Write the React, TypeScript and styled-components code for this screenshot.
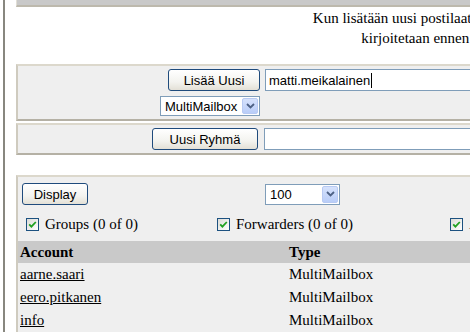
import React from 'react';
import styled, { createGlobalStyle } from 'styled-components';

const GlobalStyle = createGlobalStyle`
  html, body {
    margin: 0;
    padding: 0;
    background: #fff;
    overflow: hidden;
  }
  body {
    font-family: "Liberation Serif", "Times New Roman", serif;
    font-size: 15px;
    color: #000;
  }
`;

const Page = styled.div`
  display: flex;
  height: 332px;
`;

const LeftRule = styled.div`
  flex: none;
  width: 2px;
  margin-left: 3px;
  background: #88877f;
`;

const Main = styled.div`
  flex: none;
  width: 874px;
  margin-left: 11px;
`;

const TopBar = styled.div`
  height: 5px;
  background: #c9c9c9;
  border-left: 1px solid #e2dfd6;
  border-bottom: 2px solid #bdb9ad;
`;

const Intro = styled.div`
  padding-top: 1px;
  line-height: 20px;
  text-align: center;
`;

const Panel = styled.div<{ $mt: number }>`
  margin-top: ${(p) => p.$mt}px;
  background: #efefef;
  border: 2px solid;
  border-color: #dcd8cc #c3bfb3 #b5b1a5 #cfcbbf;
`;

const FormGrid = styled.div<{ $col: number; $gap: number }>`
  display: grid;
  grid-template-columns: ${(p) => p.$col}px 1fr;
  column-gap: ${(p) => p.$gap}px;
  row-gap: 5px;
  align-items: center;
  padding: 3px 0;
`;

const Cell = styled.div<{ $right?: boolean }>`
  display: flex;
  justify-content: ${(p) => (p.$right ? 'flex-end' : 'flex-start')};
`;

const XpButton = styled.button<{ $w: number }>`
  box-sizing: border-box;
  width: ${(p) => p.$w}px;
  height: 22px;
  padding: 0;
  border: 1px solid #1f4b7c;
  border-radius: 3px;
  background: linear-gradient(#ffffff, #f3f3ef 60%, #e3e0d6);
  font-family: "Liberation Sans", Arial, sans-serif;
  font-size: 13px;
  color: #000;
`;

const Field = styled.div`
  box-sizing: border-box;
  display: flex;
  align-items: center;
  width: 300px;
  height: 22px;
  padding: 0 3px;
  border: 1px solid #7f9db9;
  background: #fff;
  font-family: "Liberation Sans", Arial, sans-serif;
  font-size: 13px;
`;

const Caret = styled.span`
  display: inline-block;
  width: 1px;
  height: 15px;
  margin-left: 1px;
  background: #000;
`;

const Select = styled.div<{ $w: number; $h: number }>`
  box-sizing: border-box;
  display: flex;
  align-items: center;
  justify-content: space-between;
  width: ${(p) => p.$w}px;
  height: ${(p) => p.$h}px;
  padding: 1px 1px 1px 4px;
  border: 1px solid #7f9db9;
  background: #fff;
  font-family: "Liberation Sans", Arial, sans-serif;
  font-size: 13px;
`;

const Arrow = styled.span`
  box-sizing: border-box;
  display: flex;
  align-items: center;
  justify-content: center;
  width: 16px;
  align-self: stretch;
  border: 1px solid #b8caf3;
  border-radius: 2px;
  background: linear-gradient(#d6e2fc, #b9cdf8);
`;

const Controls = styled.div`
  display: grid;
  grid-template-columns: 243px 1fr;
  align-items: center;
  padding: 6px 0 0 4px;
`;

const Filters = styled.div`
  display: grid;
  grid-template-columns: 191px 233px 1fr;
  align-items: center;
  height: 20px;
  margin-top: 9px;
  padding-left: 8px;
`;

const Filter = styled.label`
  display: flex;
  align-items: center;
  gap: 6px;
  white-space: nowrap;
`;

const Box = styled.span`
  box-sizing: border-box;
  display: flex;
  align-items: center;
  justify-content: center;
  width: 13px;
  height: 13px;
  border: 1px solid #1c5180;
  background: linear-gradient(135deg, #dcdcd7, #ffffff);
`;

const Table = styled.table`
  width: 100%;
  margin-top: 7px;
  border-collapse: collapse;
  table-layout: fixed;
`;

const Th = styled.th`
  height: 22px;
  padding: 0 2px;
  background: #c9c9c9;
  text-align: left;
  font-weight: bold;
`;

const Td = styled.td`
  height: 23px;
  padding: 0 2px;
  background: #efefef;
`;

const Link = styled.a`
  color: #000;
  text-decoration: underline;
`;

const Chevron = () => (
  <svg width="9" height="6" viewBox="0 0 9 6">
    <path d="M1 1 L4.5 4.5 L8 1" fill="none" stroke="#4d6185" strokeWidth="1.8" />
  </svg>
);

const Check = ({ label }: { label: string }) => (
  <Filter>
    <Box>
      <svg width="9" height="9" viewBox="0 0 9 9">
        <path d="M1.2 4.4 L3.4 6.6 L7.8 2" fill="none" stroke="#21a121" strokeWidth="1.8" />
      </svg>
    </Box>
    {label}
  </Filter>
);

const accounts = ['aarne.saari', 'eero.pitkanen', 'info'];

const App: React.FC = () => (
  <>
    <GlobalStyle />
    <Page>
      <LeftRule />
      <Main>
        <TopBar />
        <Intro>
          Kun lisätään uusi postilaatikko, käyttäjätunnus
          <br />
          kirjoitetaan ennen @-merkkiä.
        </Intro>

        <Panel $mt={16}>
          <FormGrid $col={242} $gap={5}>
            <Cell $right>
              <XpButton $w={92}>Lisää Uusi</XpButton>
            </Cell>
            <Cell>
              <Field>
                matti.meikalainen
                <Caret />
              </Field>
            </Cell>
            <Cell $right>
              <Select $w={100} $h={20}>
                MultiMailbox
                <Arrow>
                  <Chevron />
                </Arrow>
              </Select>
            </Cell>
            <Cell />
          </FormGrid>
        </Panel>

        <Panel $mt={2}>
          <FormGrid $col={240} $gap={6}>
            <Cell $right>
              <XpButton $w={106}>Uusi Ryhmä</XpButton>
            </Cell>
            <Cell>
              <Field />
            </Cell>
          </FormGrid>
        </Panel>

        <Panel $mt={20}>
          <Controls>
            <Cell>
              <XpButton $w={66}>Display</XpButton>
            </Cell>
            <Cell>
              <Select $w={75} $h={21}>
                100
                <Arrow>
                  <Chevron />
                </Arrow>
              </Select>
            </Cell>
          </Controls>
          <Filters>
            <Check label="Groups (0 of 0)" />
            <Check label="Forwarders (0 of 0)" />
            <Check label="Aliases (0 of 0)" />
          </Filters>
          <Table>
            <colgroup>
              <col style={{ width: 269 }} />
              <col />
            </colgroup>
            <thead>
              <tr>
                <Th>Account</Th>
                <Th>Type</Th>
              </tr>
            </thead>
            <tbody>
              {accounts.map((a) => (
                <tr key={a}>
                  <Td>
                    <Link href="#">{a}</Link>
                  </Td>
                  <Td>MultiMailbox</Td>
                </tr>
              ))}
            </tbody>
          </Table>
        </Panel>
      </Main>
    </Page>
  </>
);

export default App;
